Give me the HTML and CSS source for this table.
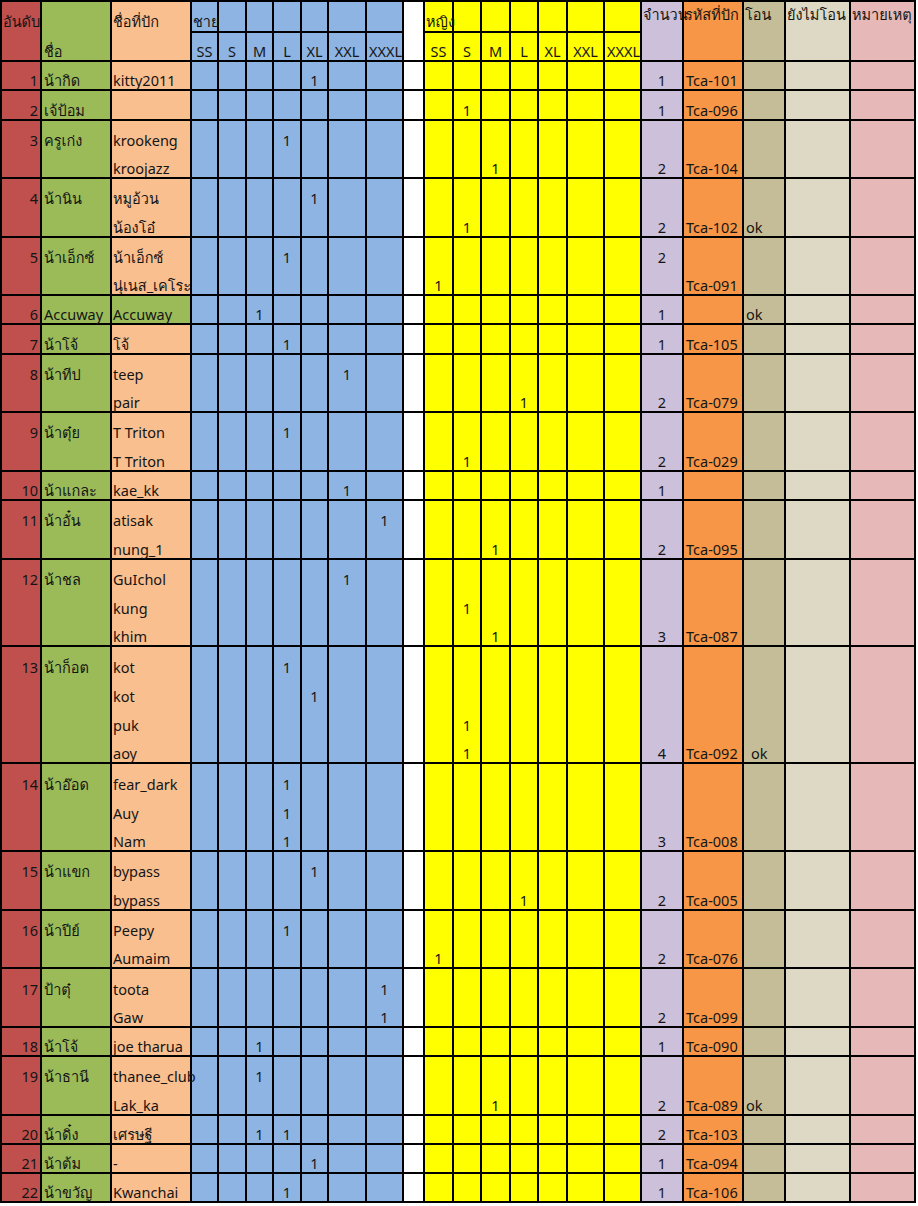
FILE: index.html
```html
<!DOCTYPE html>
<html lang="th">
<head>
<meta charset="utf-8">
<title>รายชื่อสั่งเสื้อ</title>
<link rel="stylesheet" href="styles.css">
</head>
<body>
<table class="sheet">
<colgroup>
<col class="c-red w40"><col class="c-green w70"><col class="c-peach w80">
<col class="c-blue w27"><col class="c-blue w28"><col class="c-blue w27"><col class="c-blue w28"><col class="c-blue w27"><col class="c-blue w38"><col class="c-blue w37">
<col class="c-white w21">
<col class="c-yellow w29"><col class="c-yellow w28"><col class="c-yellow w29"><col class="c-yellow w28"><col class="c-yellow w29"><col class="c-yellow w37"><col class="c-yellow w37">
<col class="c-lav w42"><col class="c-orange w60"><col class="c-tan w42"><col class="c-beige w65"><col class="c-pink w65">
</colgroup>
<thead>
<tr class="h1"><th>อันดับ</th><th></th><th>ชื่อที่ปัก</th><th class="s">ชาย</th><th class="s"></th><th class="s"></th><th class="s"></th><th class="s"></th><th class="s"></th><th class="s"></th><th></th><th class="s">หญิง</th><th class="s"></th><th class="s"></th><th class="s"></th><th class="s"></th><th class="s"></th><th class="s"></th><th class="t">จำนวน</th><th class="t">รหัสที่ปัก</th><th class="t">โอน</th><th class="t">ยังไม่โอน</th><th class="t">หมายเหตุ</th></tr>
<tr class="h2 e"><th></th><th>ชื่อ</th><th></th><th>SS</th><th>S</th><th>M</th><th>L</th><th>XL</th><th>XXL</th><th>XXXL</th><th></th><th>SS</th><th>S</th><th>M</th><th>L</th><th>XL</th><th>XXL</th><th>XXXL</th><th></th><th></th><th></th><th></th><th></th></tr>
</thead>
<tbody>
<tr class="e"><td>1</td><td>น้ากิด</td><td>kitty2011</td><td></td><td></td><td></td><td></td><td>1</td><td></td><td></td><td></td><td></td><td></td><td></td><td></td><td></td><td></td><td></td><td>1</td><td>Tca-101</td><td></td><td></td><td></td></tr>
</tbody>
<tbody>
<tr class="e"><td>2</td><td>เจ้ป้อม</td><td></td><td></td><td></td><td></td><td></td><td></td><td></td><td></td><td></td><td></td><td>1</td><td></td><td></td><td></td><td></td><td></td><td>1</td><td>Tca-096</td><td></td><td></td><td></td></tr>
</tbody>
<tbody>
<tr><td>3</td><td>ครูเก่ง</td><td>krookeng</td><td></td><td></td><td></td><td>1</td><td></td><td></td><td></td><td></td><td></td><td></td><td></td><td></td><td></td><td></td><td></td><td></td><td></td><td></td><td></td><td></td></tr>
<tr class="e"><td></td><td></td><td>kroojazz</td><td></td><td></td><td></td><td></td><td></td><td></td><td></td><td></td><td></td><td></td><td>1</td><td></td><td></td><td></td><td></td><td>2</td><td>Tca-104</td><td></td><td></td><td></td></tr>
</tbody>
<tbody>
<tr><td>4</td><td>น้านิน</td><td>หมูอ้วน</td><td></td><td></td><td></td><td></td><td>1</td><td></td><td></td><td></td><td></td><td></td><td></td><td></td><td></td><td></td><td></td><td></td><td></td><td></td><td></td><td></td></tr>
<tr class="e"><td></td><td></td><td>น้องโอ๋</td><td></td><td></td><td></td><td></td><td></td><td></td><td></td><td></td><td></td><td>1</td><td></td><td></td><td></td><td></td><td></td><td>2</td><td>Tca-102</td><td>ok</td><td></td><td></td></tr>
</tbody>
<tbody>
<tr><td>5</td><td>น้าเอ็กซ์</td><td>น้าเอ็กซ์</td><td></td><td></td><td></td><td>1</td><td></td><td></td><td></td><td></td><td></td><td></td><td></td><td></td><td></td><td></td><td></td><td>2</td><td></td><td></td><td></td><td></td></tr>
<tr class="e"><td></td><td></td><td>นุ่เนส_เคโระ</td><td></td><td></td><td></td><td></td><td></td><td></td><td></td><td></td><td>1</td><td></td><td></td><td></td><td></td><td></td><td></td><td></td><td>Tca-091</td><td></td><td></td><td></td></tr>
</tbody>
<tbody>
<tr class="e"><td>6</td><td>Accuway</td><td class="gr">Accuway</td><td></td><td></td><td>1</td><td></td><td></td><td></td><td></td><td></td><td></td><td></td><td></td><td></td><td></td><td></td><td></td><td>1</td><td></td><td>ok</td><td></td><td></td></tr>
</tbody>
<tbody>
<tr class="e"><td>7</td><td>น้าโจ้</td><td>โจ้</td><td></td><td></td><td></td><td>1</td><td></td><td></td><td></td><td></td><td></td><td></td><td></td><td></td><td></td><td></td><td></td><td>1</td><td>Tca-105</td><td></td><td></td><td></td></tr>
</tbody>
<tbody>
<tr><td>8</td><td>น้าทีป</td><td>teep</td><td></td><td></td><td></td><td></td><td></td><td>1</td><td></td><td></td><td></td><td></td><td></td><td></td><td></td><td></td><td></td><td></td><td></td><td></td><td></td><td></td></tr>
<tr class="e"><td></td><td></td><td>pair</td><td></td><td></td><td></td><td></td><td></td><td></td><td></td><td></td><td></td><td></td><td></td><td>1</td><td></td><td></td><td></td><td>2</td><td>Tca-079</td><td></td><td></td><td></td></tr>
</tbody>
<tbody>
<tr><td>9</td><td>น้าตุ๋ย</td><td>T Triton</td><td></td><td></td><td></td><td>1</td><td></td><td></td><td></td><td></td><td></td><td></td><td></td><td></td><td></td><td></td><td></td><td></td><td></td><td></td><td></td><td></td></tr>
<tr class="e"><td></td><td></td><td>T Triton</td><td></td><td></td><td></td><td></td><td></td><td></td><td></td><td></td><td></td><td>1</td><td></td><td></td><td></td><td></td><td></td><td>2</td><td>Tca-029</td><td></td><td></td><td></td></tr>
</tbody>
<tbody>
<tr class="e"><td>10</td><td>น้าแกละ</td><td>kae_kk</td><td></td><td></td><td></td><td></td><td></td><td>1</td><td></td><td></td><td></td><td></td><td></td><td></td><td></td><td></td><td></td><td>1</td><td></td><td></td><td></td><td></td></tr>
</tbody>
<tbody>
<tr><td>11</td><td>น้าอั๋น</td><td>atisak</td><td></td><td></td><td></td><td></td><td></td><td></td><td>1</td><td></td><td></td><td></td><td></td><td></td><td></td><td></td><td></td><td></td><td></td><td></td><td></td><td></td></tr>
<tr class="e"><td></td><td></td><td>nung_1</td><td></td><td></td><td></td><td></td><td></td><td></td><td></td><td></td><td></td><td></td><td>1</td><td></td><td></td><td></td><td></td><td>2</td><td>Tca-095</td><td></td><td></td><td></td></tr>
</tbody>
<tbody>
<tr><td>12</td><td>น้าชล</td><td>GuIchol</td><td></td><td></td><td></td><td></td><td></td><td>1</td><td></td><td></td><td></td><td></td><td></td><td></td><td></td><td></td><td></td><td></td><td></td><td></td><td></td><td></td></tr>
<tr><td></td><td></td><td>kung</td><td></td><td></td><td></td><td></td><td></td><td></td><td></td><td></td><td></td><td>1</td><td></td><td></td><td></td><td></td><td></td><td></td><td></td><td></td><td></td><td></td></tr>
<tr class="e"><td></td><td></td><td>khim</td><td></td><td></td><td></td><td></td><td></td><td></td><td></td><td></td><td></td><td></td><td>1</td><td></td><td></td><td></td><td></td><td>3</td><td>Tca-087</td><td></td><td></td><td></td></tr>
</tbody>
<tbody>
<tr><td>13</td><td>น้าก็อต</td><td>kot</td><td></td><td></td><td></td><td>1</td><td></td><td></td><td></td><td></td><td></td><td></td><td></td><td></td><td></td><td></td><td></td><td></td><td></td><td></td><td></td><td></td></tr>
<tr><td></td><td></td><td>kot</td><td></td><td></td><td></td><td></td><td>1</td><td></td><td></td><td></td><td></td><td></td><td></td><td></td><td></td><td></td><td></td><td></td><td></td><td></td><td></td><td></td></tr>
<tr><td></td><td></td><td>puk</td><td></td><td></td><td></td><td></td><td></td><td></td><td></td><td></td><td></td><td>1</td><td></td><td></td><td></td><td></td><td></td><td></td><td></td><td></td><td></td><td></td></tr>
<tr class="e"><td></td><td></td><td>aoy</td><td></td><td></td><td></td><td></td><td></td><td></td><td></td><td></td><td></td><td>1</td><td></td><td></td><td></td><td></td><td></td><td>4</td><td>Tca-092</td><td class="ind">ok</td><td></td><td></td></tr>
</tbody>
<tbody>
<tr><td>14</td><td>น้าอ๊อด</td><td>fear_dark</td><td></td><td></td><td></td><td>1</td><td></td><td></td><td></td><td></td><td></td><td></td><td></td><td></td><td></td><td></td><td></td><td></td><td></td><td></td><td></td><td></td></tr>
<tr><td></td><td></td><td>Auy</td><td></td><td></td><td></td><td>1</td><td></td><td></td><td></td><td></td><td></td><td></td><td></td><td></td><td></td><td></td><td></td><td></td><td></td><td></td><td></td><td></td></tr>
<tr class="e"><td></td><td></td><td>Nam</td><td></td><td></td><td></td><td>1</td><td></td><td></td><td></td><td></td><td></td><td></td><td></td><td></td><td></td><td></td><td></td><td>3</td><td>Tca-008</td><td></td><td></td><td></td></tr>
</tbody>
<tbody>
<tr><td>15</td><td>น้าแขก</td><td>bypass</td><td></td><td></td><td></td><td></td><td>1</td><td></td><td></td><td></td><td></td><td></td><td></td><td></td><td></td><td></td><td></td><td></td><td></td><td></td><td></td><td></td></tr>
<tr class="e"><td></td><td></td><td>bypass</td><td></td><td></td><td></td><td></td><td></td><td></td><td></td><td></td><td></td><td></td><td></td><td>1</td><td></td><td></td><td></td><td>2</td><td>Tca-005</td><td></td><td></td><td></td></tr>
</tbody>
<tbody>
<tr><td>16</td><td>น้าปีย์</td><td>Peepy</td><td></td><td></td><td></td><td>1</td><td></td><td></td><td></td><td></td><td></td><td></td><td></td><td></td><td></td><td></td><td></td><td></td><td></td><td></td><td></td><td></td></tr>
<tr class="e"><td></td><td></td><td>Aumaim</td><td></td><td></td><td></td><td></td><td></td><td></td><td></td><td></td><td>1</td><td></td><td></td><td></td><td></td><td></td><td></td><td>2</td><td>Tca-076</td><td></td><td></td><td></td></tr>
</tbody>
<tbody>
<tr><td>17</td><td>ป้าตุ๋</td><td>toota</td><td></td><td></td><td></td><td></td><td></td><td></td><td>1</td><td></td><td></td><td></td><td></td><td></td><td></td><td></td><td></td><td></td><td></td><td></td><td></td><td></td></tr>
<tr class="e"><td></td><td></td><td>Gaw</td><td></td><td></td><td></td><td></td><td></td><td></td><td>1</td><td></td><td></td><td></td><td></td><td></td><td></td><td></td><td></td><td>2</td><td>Tca-099</td><td></td><td></td><td></td></tr>
</tbody>
<tbody>
<tr class="e"><td>18</td><td>น้าโจ้</td><td>joe tharua</td><td></td><td></td><td>1</td><td></td><td></td><td></td><td></td><td></td><td></td><td></td><td></td><td></td><td></td><td></td><td></td><td>1</td><td>Tca-090</td><td></td><td></td><td></td></tr>
</tbody>
<tbody>
<tr><td>19</td><td>น้าธานี</td><td>thanee_club</td><td></td><td></td><td>1</td><td></td><td></td><td></td><td></td><td></td><td></td><td></td><td></td><td></td><td></td><td></td><td></td><td></td><td></td><td></td><td></td><td></td></tr>
<tr class="e"><td></td><td></td><td>Lak_ka</td><td></td><td></td><td></td><td></td><td></td><td></td><td></td><td></td><td></td><td></td><td>1</td><td></td><td></td><td></td><td></td><td>2</td><td>Tca-089</td><td>ok</td><td></td><td></td></tr>
</tbody>
<tbody>
<tr class="e"><td>20</td><td>น้าดิ๋ง</td><td>เศรษฐี</td><td></td><td></td><td>1</td><td>1</td><td></td><td></td><td></td><td></td><td></td><td></td><td></td><td></td><td></td><td></td><td></td><td>2</td><td>Tca-103</td><td></td><td></td><td></td></tr>
</tbody>
<tbody>
<tr class="e"><td>21</td><td>น้าต้ม</td><td>-</td><td></td><td></td><td></td><td></td><td>1</td><td></td><td></td><td></td><td></td><td></td><td></td><td></td><td></td><td></td><td></td><td>1</td><td>Tca-094</td><td></td><td></td><td></td></tr>
</tbody>
<tbody>
<tr class="e"><td>22</td><td>น้าขวัญ</td><td>Kwanchai</td><td></td><td></td><td></td><td>1</td><td></td><td></td><td></td><td></td><td></td><td></td><td></td><td></td><td></td><td></td><td></td><td>1</td><td>Tca-106</td><td></td><td></td><td></td></tr>
</tbody>
</table>
</body>
</html>
```
FILE: styles.css
```css
html, body {
  margin: 0;
  padding: 0;
  background: #ffffff;
}

.sheet {
  border-collapse: separate;
  border-spacing: 0;
  table-layout: fixed;
  width: 916px;
  border-left: 2px solid #000;
  border-top: 2px solid #000;
  font-family: "Noto Sans", Loma, "Noto Sans Thai", Tahoma, sans-serif;
  font-size: 14.5px;
  color: #151515;
}

/* column widths */
.w21 { width: 21px; }
.w27 { width: 27px; }
.w28 { width: 28px; }
.w29 { width: 29px; }
.w37 { width: 37px; }
.w38 { width: 38px; }
.w40 { width: 40px; }
.w42 { width: 42px; }
.w60 { width: 60px; }
.w65 { width: 65px; }
.w70 { width: 70px; }
.w80 { width: 80px; }

/* column fills */
.c-red { background: #c0504d; }
.c-green { background: #9bbb59; }
.c-peach { background: #fabf8f; }
.c-blue { background: #8db4e2; }
.c-white { background: #ffffff; }
.c-yellow { background: #ffff00; }
.c-lav { background: #ccc0da; }
.c-orange { background: #f79646; }
.c-tan { background: #c4bd97; }
.c-beige { background: #ddd9c4; }
.c-pink { background: #e6b8b7; }

.sheet td,
.sheet th {
  border-right: 2px solid #000;
  padding: 0 2px 1px 2px;
  vertical-align: bottom;
  line-height: 17px;
  white-space: nowrap;
  font-weight: normal;
  text-align: center;
  overflow: visible;
}

.sheet tr.e > td,
.sheet tr.e > th {
  border-bottom: 2px solid #000;
  padding-bottom: 0;
}

.sheet .h1 { height: 31px; }
.sheet .h1 th {
  text-align: left;
  padding-bottom: 3px;
  padding-left: 1px;
}
.sheet .h1 th.s {
  border-bottom: 2px solid #000;
  padding-bottom: 1px;
}
.sheet .h1 th.t {
  vertical-align: top;
  padding-top: 4px;
  padding-bottom: 0;
}

.sheet .h2 { height: 29px; }
.sheet .h2 th:nth-child(2) { text-align: left; }

.sheet tbody tr { height: 29.28px; }

.sheet tbody td:nth-child(1) { text-align: right; }
.sheet tbody td:nth-child(2),
.sheet tbody td:nth-child(3),
.sheet tbody td:nth-child(20),
.sheet tbody td:nth-child(21) { text-align: left; }
.sheet tbody td:nth-child(3) { padding-left: 1px; }

.sheet td.gr { background: #9bbb59; }
.sheet td.ind { padding-left: 7px; }
```
